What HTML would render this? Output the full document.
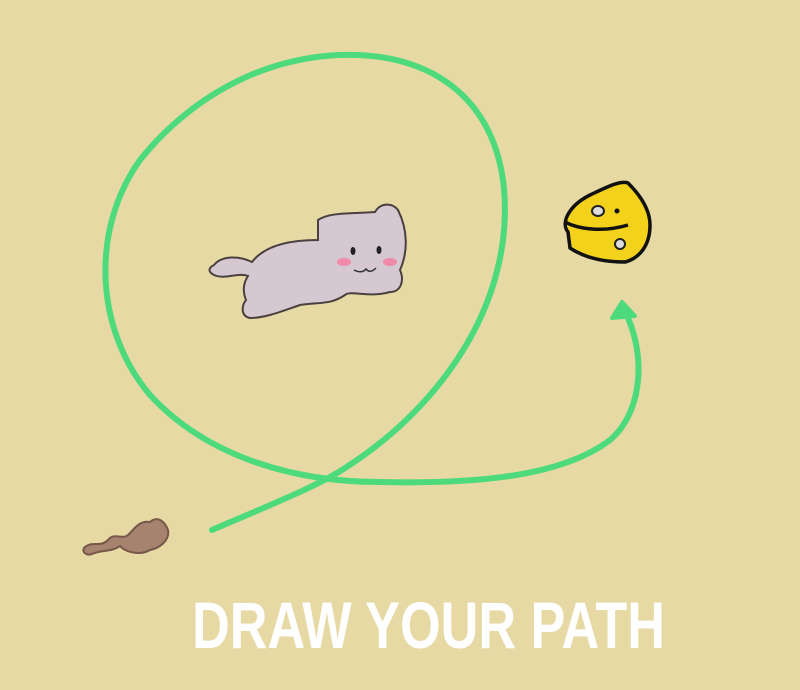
<!DOCTYPE html>
<html><head><meta charset="utf-8"><style>
html,body{margin:0;padding:0;background:#E6D9A4;}
svg{display:block}
</style></head><body>
<svg width="800" height="690" viewBox="0 0 800 690" xmlns="http://www.w3.org/2000/svg">
<rect width="800" height="690" fill="#E6D9A4"/>
<!-- green path -->
<path d="M212,530 C270,505 320,485 345,468 C420,420 490,340 503,240 C515,140 470,70 380,57 C290,45 200,85 140,160 C90,230 95,330 150,395 C210,460 300,482 380,482 C470,484 560,478 610,440 C645,410 645,350 625,312" fill="none" stroke="#4DDA7C" stroke-width="6" stroke-linecap="round"/>
<path d="M612,318 L622,302 L635,316 Z" fill="#4DDA7C" stroke="#4DDA7C" stroke-width="4" stroke-linejoin="round"/>
<!-- cat -->
<g stroke="#4a4040" stroke-width="2" fill="#D6C8D0">
<path d="M214,265 C222,255 240,256 252,262 C265,245 290,240 318,240 L318,220 C330,212 350,214 375,212 C380,203 392,202 398,210 C408,230 408,252 400,270 C405,282 400,292 390,292 C370,298 350,290 345,295 C330,305 320,302 300,305 C280,312 265,318 250,318 C240,316 242,305 246,300 C242,290 244,282 248,276 C238,272 225,280 214,275 C208,272 208,268 214,265 Z"/>
</g>
<ellipse cx="344" cy="262" rx="7" ry="4" fill="#F08AA8"/>
<ellipse cx="390" cy="262" rx="7" ry="4" fill="#F08AA8"/>
<ellipse cx="353" cy="251" rx="2.5" ry="4" fill="#222"/>
<ellipse cx="379" cy="250" rx="2.5" ry="4" fill="#222"/>
<path d="M354,270 Q362,274 366,269 Q370,274 376,268" fill="none" stroke="#333" stroke-width="1.5"/>
<!-- cheese -->
<g stroke="#111" stroke-width="3.5" stroke-linejoin="round">
<path d="M568,232 C560,222 570,205 590,195 C605,188 620,180 628,183 C640,195 650,210 650,225 C650,245 640,258 625,262 C605,262 585,258 570,248 Z" fill="#F2D21A"/>
<path d="M565,222 C580,230 605,232 628,225" fill="none"/>
</g>
<ellipse cx="598" cy="211" rx="6" ry="5" fill="#ddd" stroke="#222" stroke-width="2"/>
<circle cx="617" cy="211" r="2.5" fill="#111"/>
<ellipse cx="620" cy="244" rx="5" ry="5" fill="#ddd" stroke="#222" stroke-width="2"/>
<!-- mouse -->
<g fill="#A07A6A" stroke="#6b4a40" stroke-width="2" opacity="0.9">
<path d="M84,548 C92,540 100,548 108,540 C114,532 122,540 128,535 C135,528 140,520 150,522 C158,515 165,522 168,530 C170,540 160,548 150,550 C140,556 125,552 120,546 C112,552 100,550 92,554 C86,556 82,552 84,548 Z"/>
</g>
<text x="192" y="648" textLength="473" lengthAdjust="spacingAndGlyphs" font-family="Liberation Sans, sans-serif" font-weight="bold" font-size="66" fill="#FFFFFF">DRAW YOUR PATH</text>
</svg>
</body></html>
